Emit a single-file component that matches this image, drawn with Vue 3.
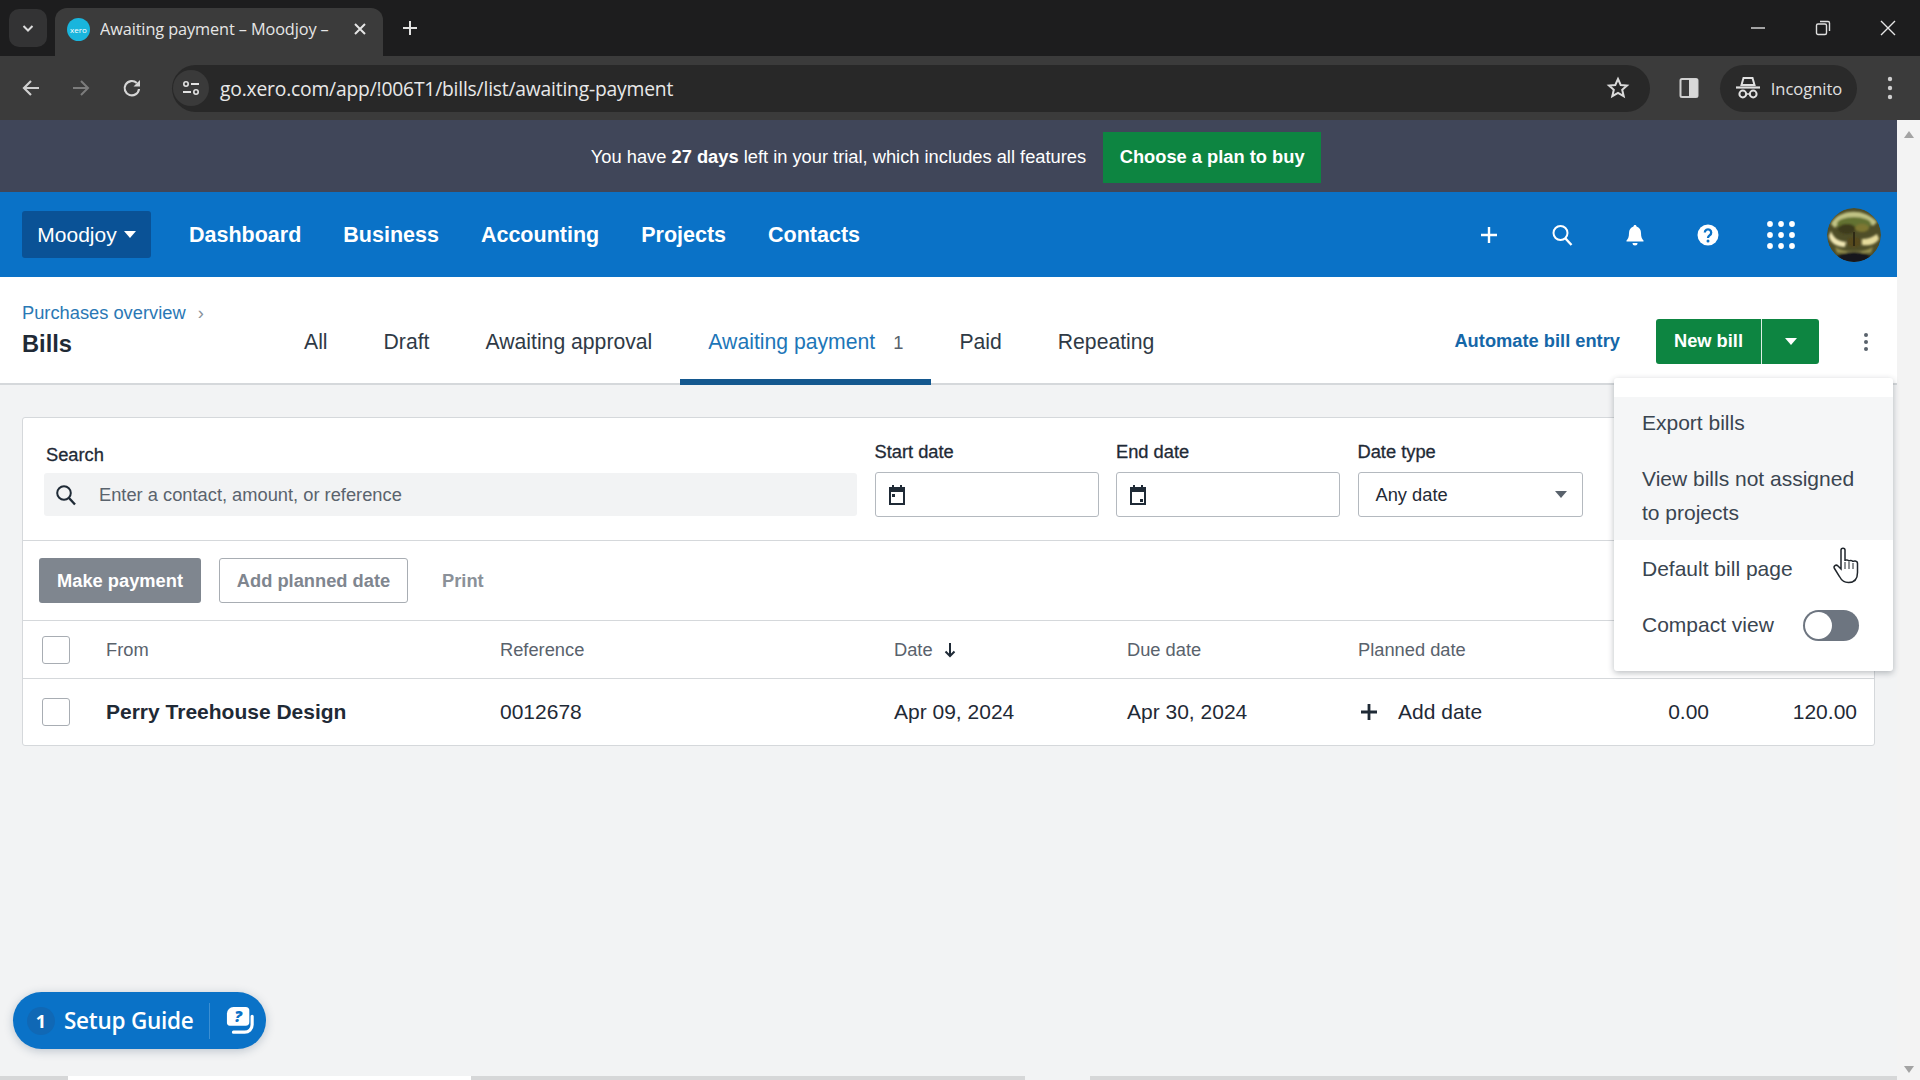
<template>
  <div class="screen">
    <!-- browser chrome -->
    <div class="tabstrip">
      <div class="tab-search">
        <svg width="14" height="14" viewBox="0 0 14 14"><path d="M2.500 5l4.500 4.500L11.500 5" fill="none" stroke="#dcdcdc" stroke-width="2" /></svg>
      </div>
      <div class="tab">
        <span class="favicon">xero</span>
        <span class="tab-title">Awaiting payment – Moodjoy –</span>
        <svg class="tab-close" width="14" height="14" viewBox="0 0 14 14"><path d="M2 2l10 10M12 2L2 12" stroke="#e4e4e4" stroke-width="2" /></svg>
      </div>
      <svg class="new-tab" width="18" height="18" viewBox="0 0 18 18"><path d="M9 2v14M2 9h14" stroke="#e2e2e2" stroke-width="2" /></svg>
      <div class="win-btns">
        <svg width="16" height="16" viewBox="0 0 16 16"><path d="M1 8h14" stroke="#dedede" stroke-width="1.400" /></svg>
        <svg width="16" height="16" viewBox="0 0 16 16"><rect x="1.500" y="4" width="10" height="10.500" rx="1.500" fill="none" stroke="#dedede" stroke-width="1.400" /><path d="M5 1.500h8a1.500 1.500 0 0 1 1.500 1.500v8" fill="none" stroke="#dedede" stroke-width="1.400" /></svg>
        <svg width="16" height="16" viewBox="0 0 16 16"><path d="M1 1l14 14M15 1L1 15" stroke="#e6e6e6" stroke-width="1.400" /></svg>
      </div>
    </div>
    <div class="toolbar">
      <svg width="22" height="22" viewBox="0 0 22 22"><path d="M19 11H4M11 4l-7 7 7 7" fill="none" stroke="#cfcfcf" stroke-width="2.200" /></svg>
      <svg class="fwd" width="22" height="22" viewBox="0 0 22 22"><path d="M3 11h15M11 4l7 7-7 7" fill="none" stroke="#7c7c7c" stroke-width="2" /></svg>
      <svg class="reload" width="22" height="22" viewBox="0 0 22 22"><path d="M18 12a7.200 7.200 0 1 1-2.200-6" fill="none" stroke="#d6d6d6" stroke-width="2.200" /><path d="M19 3v6.500h-6.500z" fill="#d6d6d6" /></svg>
      <div class="omnibox">
        <span class="site-info">
          <svg width="20" height="20" viewBox="0 0 20 20"><circle cx="5" cy="6" r="2.200" fill="none" stroke="#e2e2e2" stroke-width="1.600" /><path d="M10 6h8M2 14h8" stroke="#e2e2e2" stroke-width="1.800" /><circle cx="15" cy="14" r="2.200" fill="none" stroke="#e2e2e2" stroke-width="1.600" /></svg>
        </span>
        <span class="url">go.xero.com/app/!006T1/bills/list/awaiting-payment</span>
        <svg class="star" width="24" height="24" viewBox="0 0 24 24"><path d="M12 3l2.700 6 6.300.6-4.800 4.200 1.500 6.400L12 16.800 6.300 20.200l1.500-6.400L3 9.600 9.300 9z" fill="none" stroke="#dadada" stroke-width="2" /></svg>
      </div>
      <svg class="side" width="22" height="24" viewBox="0 0 22 24"><rect x="2.500" y="3" width="17" height="18" rx="1.500" fill="none" stroke="#d0d0d0" stroke-width="2" /><rect x="11" y="3" width="8.500" height="18" fill="#d8d8d8" /></svg>
      <div class="incognito">
        <svg width="26" height="26" viewBox="0 0 26 26"><path d="M8.500 3h9l2 7h-13z" fill="none" stroke="#e0e0e0" stroke-width="2" /><path d="M1 12.500h24" stroke="#e0e0e0" stroke-width="2.200" /><circle cx="7.800" cy="19" r="3.400" fill="none" stroke="#e0e0e0" stroke-width="2" /><circle cx="18.200" cy="19" r="3.400" fill="none" stroke="#e0e0e0" stroke-width="2" /><path d="M11 19h4" stroke="#e0e0e0" stroke-width="1.500" /></svg>
        <span>Incognito</span>
      </div>
      <svg class="menu" width="6" height="24" viewBox="0 0 6 24"><circle cx="3" cy="3" r="2.200" fill="#cfcfcf" /><circle cx="3" cy="12" r="2.200" fill="#cfcfcf" /><circle cx="3" cy="21" r="2.200" fill="#cfcfcf" /></svg>
    </div>

    <div class="viewport">
      <div class="page">
        <div class="trial">
          <span>You have <b>27 days</b> left in your trial, which includes all features</span>
          <button class="buy">Choose a plan to buy</button>
        </div>

        <nav class="nav">
          <button class="org">Moodjoy <i class="caret"></i></button>
          <a v-for="item in navItems" :key="item" class="nav-link">{{ item }}</a>
          <div class="nav-icons">
            <svg width="24" height="24" viewBox="0 0 24 24"><path d="M12 4v16M4 12h16" stroke="#fff" stroke-width="2.400" /></svg>
            <svg width="24" height="24" viewBox="0 0 24 24"><circle cx="10.500" cy="10" r="7" fill="none" stroke="#fff" stroke-width="2" /><path d="M15.500 15.500l6 6.500" stroke="#fff" stroke-width="2.400" /></svg>
            <svg width="24" height="24" viewBox="0 0 24 24"><path d="M12 2c1 0 1.500.7 1.500 1.500C16.500 4.300 18 7 18 10c0 4 1 6 2.500 7.500v1h-17v-1C5 16 6 14 6 10c0-3 1.500-5.700 4.500-6.500C10.500 2.700 11 2 12 2z" fill="#fff" /><path d="M9.500 20h5a2.500 2.500 0 0 1-5 0z" fill="#fff" /></svg>
            <svg class="help" width="24" height="24" viewBox="0 0 24 24"><circle cx="12" cy="12" r="10.500" fill="#fff" /><path d="M8.800 9.500A3.200 3.200 0 1 1 13.700 12.300C12.600 13 12 13.500 12 15" fill="none" stroke="#0a72c7" stroke-width="2.300" /><circle cx="12" cy="18" r="1.500" fill="#0a72c7" /></svg>
            <svg width="30" height="30" viewBox="0 0 30 30" fill="#fff"><circle v-for="d in gridDots" :key="d.k" :cx="d.x" :cy="d.y" r="2.900" /></svg>
            <div class="avatar">
              <svg width="54" height="54" viewBox="0 0 54 54">
                <defs>
                  <filter id="soft"><feGaussianBlur stdDeviation="1.200" /></filter>
                  <clipPath id="disc"><circle cx="27" cy="27" r="27" /></clipPath>
                </defs>
                <g clip-path="url(#disc)">
                  <rect width="54" height="54" fill="#4f4e28" />
                  <g filter="url(#soft)">
                    <path d="M4 16C10 2 36 -2 50 14l-4 4C36 8 18 8 8 20z" fill="#c0c284" />
                    <ellipse cx="27" cy="16" rx="17" ry="7" fill="#647230" />
                    <ellipse cx="20" cy="21" rx="9" ry="5" fill="#3d3a1a" />
                    <ellipse cx="35" cy="20" rx="7" ry="4" fill="#7e7732" />
                    <path d="M4 23c2 6 6 10 15 11l-1 5C10 39 3 35 2 28z" fill="#efe6b4" />
                    <path d="M35 31c6 0 11-2 15-5l2 5c-4 6-11 7-17 6z" fill="#e6db9c" />
                    <ellipse cx="27" cy="34" rx="7" ry="5" fill="#57481c" />
                    <path d="M8 39c10 6 28 6 38 0l-2 6H10z" fill="#948f50" />
                    <ellipse cx="27" cy="51" rx="17" ry="7" fill="#12161e" />
                  </g>
                  <path d="M27 24v14" stroke="#2f2a14" stroke-width="2" />
                </g>
              </svg>
            </div>
          </div>
        </nav>

        <header class="subhead">
          <div class="title-block">
            <div class="crumb">Purchases overview <span class="crumb-sep">›</span></div>
            <h1>Bills</h1>
          </div>
          <div class="tabs">
            <a v-for="t in billTabs" :key="t.label" class="bill-tab" :class="{ active: t.active }">
              {{ t.label }}<span v-if="t.count" class="count">{{ t.count }}</span>
            </a>
          </div>
          <a class="automate">Automate bill entry</a>
          <div class="new-bill">
            <span class="nb-main">New bill</span>
            <span class="nb-drop"><i class="caret"></i></span>
          </div>
          <svg class="kebab" width="6" height="20" viewBox="0 0 6 20"><circle cx="3" cy="3" r="2" fill="#59626c" /><circle cx="3" cy="10" r="2" fill="#59626c" /><circle cx="3" cy="17" r="2" fill="#59626c" /></svg>
        </header>

        <main class="content">
          <section class="card">
            <div class="filters">
              <div class="field search-field">
                <label class="search-label">Search</label>
                <div class="search-input">
                  <svg width="24" height="24" viewBox="0 0 24 24"><circle cx="10" cy="10" r="6.800" fill="none" stroke="#1f2a36" stroke-width="2" /><path d="M15 15l6 6.500" stroke="#1f2a36" stroke-width="2.400" /></svg>
                  <span>Enter a contact, amount, or reference</span>
                </div>
              </div>
              <div class="field date-field">
                <label>Start date</label>
                <div class="input">
                  <svg width="18" height="22" viewBox="0 0 18 22"><path d="M1 3h3V1h2v2h6V1h2v2h3v18H1z" fill="#1f2a36" /><rect x="3" y="8" width="12" height="11" fill="#fff" /><rect x="4" y="10" width="3" height="3" fill="#1f2a36" /></svg>
                </div>
              </div>
              <div class="field date-field">
                <label>End date</label>
                <div class="input">
                  <svg width="18" height="22" viewBox="0 0 18 22"><path d="M1 3h3V1h2v2h6V1h2v2h3v18H1z" fill="#1f2a36" /><rect x="3" y="8" width="12" height="11" fill="#fff" /><rect x="11" y="15" width="3" height="3" fill="#1f2a36" /></svg>
                </div>
              </div>
              <div class="field date-field">
                <label>Date type</label>
                <div class="input select">
                  <span>Any date</span>
                  <i class="caret dark"></i>
                </div>
              </div>
            </div>

            <div class="actions">
              <button class="btn-make">Make payment</button>
              <button class="btn-plan">Add planned date</button>
              <span class="btn-print">Print</span>
            </div>

            <div class="row head">
              <span class="check"></span>
              <span>From</span>
              <span>Reference</span>
              <span class="date-head">Date
                <svg width="12" height="16" viewBox="0 0 12 16"><path d="M6 1v13M1.500 9.500L6 14l4.500-4.500" fill="none" stroke="#1f2a36" stroke-width="2" /></svg>
              </span>
              <span>Due date</span>
              <span>Planned date</span>
            </div>
            <div class="row body">
              <span class="check"></span>
              <b>Perry Treehouse Design</b>
              <span>0012678</span>
              <span>Apr 09, 2024</span>
              <span>Apr 30, 2024</span>
              <span class="add-date">
                <svg width="18" height="18" viewBox="0 0 18 18"><path d="M9 1v16M1 9h16" stroke="#1f2a36" stroke-width="2.800" /></svg>
                Add date
              </span>
              <span class="amount paid">0.00</span>
              <span class="amount due">120.00</span>
            </div>
          </section>
        </main>

        <!-- kebab menu, open over the page -->
        <div class="dropdown">
          <div class="hovered">
            <div class="dd-item first">Export bills</div>
            <div class="dd-item two">View bills not assigned<br />to projects</div>
          </div>
          <div class="dd-item default">Default bill page</div>
          <div class="dd-item compact">
            Compact view
            <span class="toggle"><i></i></span>
          </div>
        </div>

        <svg class="cursor" width="28" height="38" viewBox="0 0 28 38">
          <path d="M8 3c0-2.500 4-2.500 4 0v11c0-1.500 4-1.500 4 .5 0-1.500 4-1.500 4 .5 0-1.500 4.500-1.500 4.500 1.500v9c0 6-3 10-9 10-5 0-7-2-9-6l-5-8c-1.500-2.500 1.500-4.500 3.500-2.500L8 22z" fill="#fff" stroke="#20262c" stroke-width="1.500" />
          <path d="M12 15v7M16 15v7M20 16v6" stroke="#20262c" stroke-width="1" />
        </svg>

        <div class="setup-guide">
          <span class="sg-num">1</span>
          <span class="sg-label">Setup Guide</span>
          <span class="sg-sep"></span>
          <svg width="28" height="30" viewBox="0 0 30 32">
            <path d="M8 1h13a4 4 0 0 1 4 4v12a4 4 0 0 1-4 4H4a3 3 0 0 1-3-3V8a7 7 0 0 1 7-7z" fill="#fff" />
            <text x="13" y="17.500" text-anchor="middle" font-family="Open Sans" font-weight="800" font-style="italic" font-size="17" fill="#0a72c7">?</text>
            <path d="M28 11v9a8 8 0 0 1-8 8H8" fill="none" stroke="#fff" stroke-width="3.400" stroke-linecap="round" />
          </svg>
        </div>

        <div class="bottom-edge"></div>
      </div>
      <div class="scrollbar">
        <svg width="12" height="9" viewBox="0 0 12 9"><path d="M6 1l5 7H1z" fill="#a3a3a3" /></svg>
        <svg width="12" height="9" viewBox="0 0 12 9"><path d="M1 1h10L6 8z" fill="#a3a3a3" /></svg>
      </div>
    </div>
  </div>
</template>

<script setup>
const navItems = ['Dashboard', 'Business', 'Accounting', 'Projects', 'Contacts'];

const billTabs = [
  { label: 'All' },
  { label: 'Draft' },
  { label: 'Awaiting approval' },
  { label: 'Awaiting payment', count: 1, active: true },
  { label: 'Paid' },
  { label: 'Repeating' }
];

const gridDots = [];
for (let r = 0; r < 3; r++) {
  for (let c = 0; c < 3; c++) {
    gridDots.push({ k: `${r}-${c}`, x: 4 + c * 11, y: 4 + r * 11 });
  }
}
</script>

<style>
html,
body {
  margin: 0;
  background: #f2f3f4;
}
</style>

<style scoped>
.screen {
  width: 1920px;
  height: 1080px;
  overflow: hidden;
  display: flex;
  flex-direction: column;
  font-family: "Liberation Sans", Arial, sans-serif;
  color: #1f2a36;
}

.tabstrip {
  height: 56px;
  flex: none;
  display: flex;
  align-items: flex-end;
  background: #1d1d1e;
}

.tab-search {
  width: 38px;
  height: 38px;
  margin: 0 0 9px 9px;
  border-radius: 10px;
  background: #333334;
  display: flex;
  align-items: center;
  justify-content: center;
}

.tab {
  width: 328px;
  height: 48px;
  margin-left: 8px;
  padding: 0 16px 6px 12px;
  box-sizing: border-box;
  background: #3b3b3b;
  border-radius: 12px 12px 0 0;
  display: flex;
  align-items: center;
  color: #e6e6e6;
  font-family: "Open Sans", sans-serif;
  font-size: 16.300px;
}

.favicon {
  width: 23px;
  height: 23px;
  border-radius: 50%;
  background: #19b5dd;
  color: #fff;
  font-size: 8px;
  line-height: 23px;
  text-align: center;
  flex: none;
}

.tab-title {
  margin-left: 10px;
  white-space: nowrap;
  overflow: hidden;
  width: 236px;
  letter-spacing: -0.1px;
}

.tab-close {
  margin-left: auto;
  flex: none;
}

.new-tab {
  margin: 0 0 19px 18px;
}

.win-btns {
  margin: 0 0 20px auto;
  display: flex;
  gap: 49px;
  padding-right: 24px;
}

.toolbar {
  height: 64px;
  flex: none;
  display: flex;
  align-items: center;
  background: #3b3b3b;
  padding-left: 20px;
  box-sizing: border-box;
}

.fwd {
  margin-left: 28px;
}

.reload {
  margin-left: 29px;
}

.omnibox {
  width: 1478px;
  height: 47px;
  margin-left: 29px;
  border-radius: 24px;
  background: #282828;
  display: flex;
  align-items: center;
  color: #e8e8e8;
  font-family: "Open Sans", sans-serif;
  font-size: 19.300px;
  flex: none;
}

.site-info {
  width: 36px;
  height: 36px;
  margin-left: 1px;
  border-radius: 50%;
  background: #3a3a3a;
  display: flex;
  align-items: center;
  justify-content: center;
}

.url {
  margin-left: 11px;
  letter-spacing: -0.2px;
}

.star {
  margin-left: auto;
  margin-right: 20px;
}

.side {
  margin-left: 28px;
}

.incognito {
  width: 137px;
  height: 47px;
  margin-left: 20px;
  border-radius: 24px;
  background: #2a2a2a;
  display: flex;
  align-items: center;
  justify-content: center;
  gap: 10px;
  color: #e0e0e0;
  font-family: "Open Sans", sans-serif;
  font-size: 16.500px;
}

.menu {
  margin-left: 30px;
}

.viewport {
  flex: 1;
  display: flex;
  min-height: 0;
}

.page {
  width: 1897px;
  position: relative;
  background: #f2f3f4;
  box-sizing: border-box;
}

.bottom-edge {
  position: absolute;
  left: 0;
  right: 0;
  bottom: 0;
  height: 4px;
  background: linear-gradient(to right, #d6d7d8 68px, #fff 68px, #fff 471px, #d6d7d8 471px, #d6d7d8 1025px, #f2f3f4 1025px, #f2f3f4 1090px, #d6d7d8 1090px);
}

.scrollbar {
  flex: 1;
  background: #f3f3f3;
  display: flex;
  flex-direction: column;
  justify-content: space-between;
  align-items: center;
  padding: 10px 0 6px;
}

.trial {
  height: 72px;
  background: #404659;
  color: #fff;
  display: flex;
  align-items: center;
  justify-content: center;
  gap: 17px;
  font-size: 18.300px;
  padding: 2px 0 0 15px;
  box-sizing: border-box;
}

.buy {
  width: 218px;
  height: 51px;
  border: none;
  background: #0d8541;
  color: #fff;
  font: bold 18.300px "Liberation Sans", Arial, sans-serif;
}

.nav {
  height: 85px;
  background: #0a72c7;
  display: flex;
  align-items: center;
  padding-left: 22px;
  box-sizing: border-box;
  color: #fff;
}

.org {
  width: 129px;
  height: 47px;
  margin-right: 38px;
  border: none;
  border-radius: 3px;
  background: #0a5296;
  color: #fff;
  font: 21px "Liberation Sans", Arial, sans-serif;
  display: flex;
  align-items: center;
  justify-content: center;
  gap: 7px;
}

.caret {
  width: 0;
  height: 0;
  display: inline-block;
  border-left: 6.500px solid transparent;
  border-right: 6.500px solid transparent;
  border-top: 7px solid #fff;
}

.caret.dark {
  border-top-color: #59626c;
}

.nav-link {
  margin-right: 42px;
  margin-top: 2px;
  font-size: 21.500px;
  font-weight: bold;
}

.nav-icons {
  margin-left: auto;
  display: flex;
  align-items: center;
  gap: 49px;
  padding-right: 16px;
}

.help {
  margin-right: -3px;
}

.avatar {
  width: 54px;
  height: 54px;
  margin-left: -18px;
  border-radius: 50%;
  overflow: hidden;
}

.avatar svg {
  display: block;
}

.subhead {
  height: 108px;
  background: #fff;
  border-bottom: 2px solid #d5d8db;
  box-sizing: border-box;
  display: flex;
  align-items: stretch;
  position: relative;
  padding-left: 22px;
}

.title-block {
  width: 254px;
  padding-top: 25px;
}

.crumb {
  color: #2a78b5;
  font-size: 18.300px;
  line-height: 22px;
}

.crumb-sep {
  color: #8a929b;
  margin-left: 7px;
}

h1 {
  margin: 6px 0 0;
  font-size: 23.700px;
  line-height: 28px;
}

.tabs {
  display: flex;
  align-items: stretch;
  font-size: 21.200px;
}

.bill-tab {
  padding: 52px 28px 0;
  line-height: 26px;
  color: #2f3a46;
  box-sizing: border-box;
  border-bottom: 6px solid transparent;
  height: 108px;
  white-space: nowrap;
}

.bill-tab.active {
  color: #1d76b8;
  border-bottom-color: #14588f;
}

.count {
  color: #59626c;
  margin-left: 18px;
  font-size: 18.300px;
}

.automate {
  margin-left: auto;
  align-self: center;
  color: #1567a8;
  font-size: 18.300px;
  font-weight: bold;
  margin-top: 22px;
}

.new-bill {
  width: 163px;
  height: 45px;
  margin-left: 36px;
  margin-right: 78px;
  align-self: center;
  margin-top: 22px;
  border-radius: 3px;
  background: #0d8541;
  color: #fff;
  font-size: 18.300px;
  font-weight: bold;
  display: flex;
  align-items: center;
}

.nb-main {
  width: 106px;
  height: 100%;
  box-sizing: border-box;
  border-right: 1px solid #dfeee6;
  display: flex;
  align-items: center;
  justify-content: center;
}

.nb-drop {
  flex: 1;
  display: flex;
  justify-content: center;
}

.kebab {
  position: absolute;
  left: 1863px;
  top: 55px;
}

.content {
  padding: 32px 22px 0;
}

.card {
  width: 1853px;
  background: #fff;
  border: 1px solid #d5d8db;
  border-radius: 3px;
  box-sizing: border-box;
}

.filters {
  height: 123px;
  border-bottom: 1px solid #d5d8db;
  display: flex;
  align-items: flex-end;
  padding: 0 0 23px 21px;
  box-sizing: border-box;
  gap: 17.500px;
}

.field label {
  display: block;
  font-size: 18.300px;
  line-height: 22px;
  margin-bottom: 9px;
  -webkit-text-stroke: 0.3px;
}

.field .search-label {
  margin-bottom: 7px;
  padding-left: 2px;
  margin-top: -2px;
}

.search-field {
  margin-bottom: 1px;
}

.search-input {
  width: 813px;
  height: 43px;
  background: #f2f3f4;
  border-radius: 3px;
  display: flex;
  align-items: center;
  padding-left: 10px;
  gap: 21px;
  box-sizing: border-box;
  color: #5a636d;
  font-size: 18.300px;
}

.search-input svg {
  flex: none;
}

.input {
  width: 224px;
  height: 45px;
  border: 1px solid #b4b9bf;
  border-radius: 3px;
  box-sizing: border-box;
  display: flex;
  align-items: center;
  padding-left: 12px;
  font-size: 18.300px;
  background: #fff;
}

.input.select {
  padding: 0 15px 0 17px;
  justify-content: space-between;
  width: 225px;
}

.actions {
  height: 80px;
  border-bottom: 1px solid #d5d8db;
  box-sizing: border-box;
  display: flex;
  align-items: center;
  padding-left: 16px;
  font-size: 18.300px;
  font-weight: bold;
}

.btn-make {
  width: 162px;
  height: 45px;
  border: none;
  border-radius: 3px;
  background: #7f868f;
  color: #fff;
  font: inherit;
}

.btn-plan {
  width: 189px;
  height: 45px;
  margin-left: 18px;
  border: 1px solid #a8adb3;
  border-radius: 3px;
  background: #fff;
  color: #7f868f;
  font: inherit;
}

.btn-print {
  margin-left: 34px;
  color: #8b9199;
}

.row {
  display: grid;
  grid-template-columns: 64px 394px 394px 233px 231px 200px 1fr 149px;
  align-items: center;
  padding-left: 19px;
  box-sizing: border-box;
}

.row.head {
  height: 58px;
  border-bottom: 1px solid #d5d8db;
  font-size: 18.300px;
  color: #59626c;
}

.row.body {
  height: 66px;
  font-size: 21px;
}

.check {
  width: 28px;
  height: 28px;
  border: 1px solid #a8adb3;
  border-radius: 3px;
  box-sizing: border-box;
  background: #fff;
}

.date-head {
  display: flex;
  align-items: center;
  gap: 11px;
}

.add-date {
  display: flex;
  align-items: center;
  gap: 20px;
  padding-left: 2px;
}

.amount {
  text-align: right;
}

.paid {
  padding-right: 16px;
}

.due {
  padding-right: 17px;
}

.dropdown {
  position: absolute;
  left: 1614px;
  top: 258px;
  width: 279px;
  height: 293px;
  padding-top: 19px;
  box-sizing: border-box;
  background: #fff;
  border-radius: 3px;
  box-shadow: 0 2px 6px rgba(30, 40, 50, 0.3);
  font-size: 21px;
  color: #3a4550;
}

.hovered {
  background: #f5f6f7;
}

.dd-item {
  padding: 0 28px;
  height: 56px;
  display: flex;
  align-items: center;
}

.dd-item.first {
  height: 51px;
}

.dd-item.two {
  display: block;
  height: 92px;
  line-height: 34px;
  padding-top: 14px;
  box-sizing: border-box;
}

.dd-item.default {
  margin-top: 1px;
}

.compact {
  justify-content: space-between;
  padding-right: 34px;
}

.toggle {
  width: 56px;
  height: 31px;
  border-radius: 16px;
  background: #6d7580;
  position: relative;
  flex: none;
}

.toggle i {
  position: absolute;
  left: 2px;
  top: 2px;
  width: 27px;
  height: 27px;
  border-radius: 50%;
  background: #fff;
}

.cursor {
  position: absolute;
  left: 1833px;
  top: 427px;
}

.setup-guide {
  position: absolute;
  left: 13px;
  top: 872px;
  width: 253px;
  height: 57px;
  border-radius: 29px;
  background: #0a72c7;
  box-shadow: 0 2px 10px rgba(30, 60, 90, 0.25);
  color: #fff;
  display: flex;
  align-items: center;
  font-family: "Open Sans", sans-serif;
}

.sg-num {
  width: 28px;
  height: 28px;
  margin-left: 14px;
  border-radius: 50%;
  background: #1068b5;
  text-align: center;
  line-height: 28px;
  font-size: 18px;
  font-weight: 700;
}

.sg-label {
  margin-left: 9px;
  font-size: 22.500px;
  font-weight: 600;
  letter-spacing: -0.25px;
  white-space: nowrap;
}

.sg-sep {
  width: 1px;
  height: 36px;
  margin: 0 16px 0 15px;
  background: #3b8fd3;
}
</style>
